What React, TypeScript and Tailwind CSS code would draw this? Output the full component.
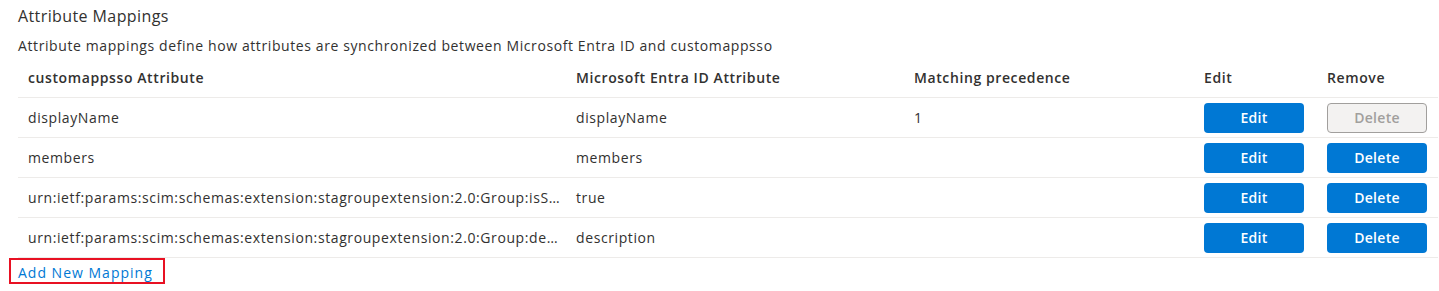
import React from "react";

type Mapping = {
  target: string;
  source: string;
  precedence?: string;
  canDelete: boolean;
};

const MAPPINGS: Mapping[] = [
  { target: "displayName", source: "displayName", precedence: "1", canDelete: false },
  { target: "members", source: "members", canDelete: true },
  {
    target: "urn:ietf:params:scim:schemas:extension:stagroupextension:2.0:Group:isSyncEnabled",
    source: "true",
    canDelete: true,
  },
  {
    target: "urn:ietf:params:scim:schemas:extension:stagroupextension:2.0:Group:description",
    source: "description",
    canDelete: true,
  },
];

const COLS = "grid grid-cols-[548px_338px_290px_123px_1fr]";

const App: React.FC = () => {
  return (
    <main
      className="min-h-screen bg-white pl-[18px] pr-px text-[#323130] tracking-[0.6px]"
      style={{ fontFamily: '"Open Sans", "Noto Sans", sans-serif' }}
    >
      <h2 className="pt-[5px] text-base leading-[22px] tracking-[0.4px]">Attribute Mappings</h2>
      <p className="mt-[9px] text-sm leading-5">
        Attribute mappings define how attributes are synchronized between Microsoft Entra ID and customappsso
      </p>

      {/* Header row */}
      <div className={`${COLS} mt-[3px] h-[39px] items-center border-b border-[#edebe9] text-sm font-semibold`}>
        <div className="pl-[10px]">customappsso Attribute</div>
        <div className="pl-[10px]">Microsoft Entra ID Attribute</div>
        <div className="pl-[10px]">Matching precedence</div>
        <div className="pl-[10px]">Edit</div>
        <div className="pl-[10px]">Remove</div>
      </div>

      {MAPPINGS.map((m) => (
        <div key={m.target} className={`${COLS} h-10 items-center border-b border-[#edebe9] text-sm`}>
          <div className="truncate pl-[10px] pr-[5px]">{m.target}</div>
          <div className="pl-[10px]">{m.source}</div>
          <div className="pl-[10px]">{m.precedence ?? ""}</div>
          <div className="pl-[10px]">
            <button className="h-[30px] w-[100px] rounded-sm bg-[#0078d4] text-sm font-semibold tracking-[0.3px] text-white">
              Edit
            </button>
          </div>
          <div className="pl-[10px]">
            {m.canDelete ? (
              <button className="h-[30px] w-[100px] rounded-sm bg-[#0078d4] text-sm font-semibold tracking-[0.3px] text-white">
                Delete
              </button>
            ) : (
              <button
                disabled
                className="h-[30px] w-[100px] rounded-sm border border-[#a19f9d] bg-[#f3f2f1] text-sm font-semibold tracking-[0.3px] text-[#a19f9d]"
              >
                Delete
              </button>
            )}
          </div>
        </div>
      ))}

      <div className="-ml-[9px] inline-block h-[26px] border-2 border-[#e81123] pl-[7px] pr-[10px]">
        <a href="#" className="text-sm leading-[22px] tracking-[1px] text-[#0078d4]">
          Add New Mapping
        </a>
      </div>
    </main>
  );
};

export default App;
